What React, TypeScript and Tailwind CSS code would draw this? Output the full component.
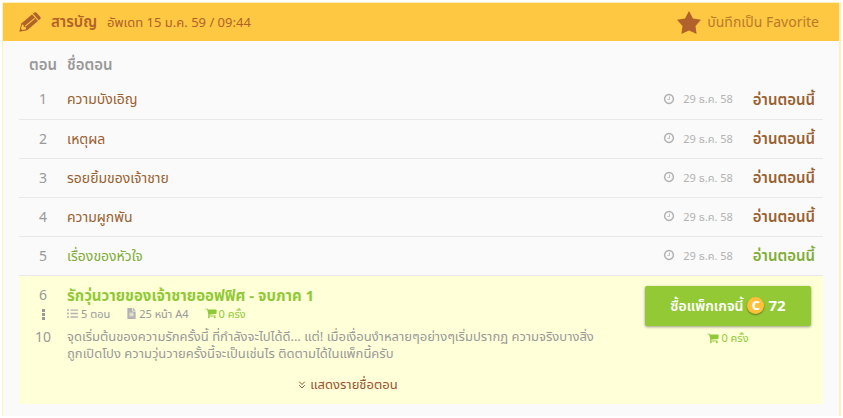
import type { ReactNode } from 'react';
import { ChevronsDown } from 'lucide-react';
import { FaFileAlt, FaListUl } from 'react-icons/fa';

const CHAPTERS = [
  { no: 1, title: 'ความบังเอิญ', date: '29 ธ.ค. 58', isNew: false },
  { no: 2, title: 'เหตุผล', date: '29 ธ.ค. 58', isNew: false },
  { no: 3, title: 'รอยยิ้มของเจ้าชาย', date: '29 ธ.ค. 58', isNew: false },
  { no: 4, title: 'ความผูกพัน', date: '29 ธ.ค. 58', isNew: false },
  { no: 5, title: 'เรื่องของหัวใจ', date: '29 ธ.ค. 58', isNew: true }
];

function Glyph({ className, children }: { className: string; children: ReactNode }) {
  return (
    <svg viewBox="0 0 1792 1792" fill="currentColor" aria-hidden="true" className={className}>
      {children}
    </svg>
  );
}

function ClockIcon() {
  return (
    <Glyph className="size-3">
      <path d="M1024 544v448q0 14-9 23t-23 9h-320q-14 0-23-9t-9-23v-64q0-14 9-23t23-9h224v-352q0-14 9-23t23-9h64q14 0 23 9t9 23zm416 352q0-148-73-273t-198-198-273-73-273 73-198 198-73 273 73 273 198 198 273 73 273-73 198-198 73-273zm224 0q0 209-103 385.5t-279.5 279.5-385.5 103-385.5-103-279.5-279.5-103-385.5 103-385.5 279.5-279.5 385.5-103 385.5 103 279.5 279.5 103 385.5z" />
    </Glyph>
  );
}

function CartIcon() {
  return (
    <Glyph className="size-3">
      <path d="M704 1536q0 52-38 90t-90 38-90-38-38-90 38-90 90-38 90 38 38 90zm896 0q0 52-38 90t-90 38-90-38-38-90 38-90 90-38 90 38 38 90zm128-1088v512q0 24-16.5 42.5t-40.5 21.5l-1044 122q13 60 13 70 0 16-24 64h920q26 0 45 19t19 45-19 45-45 19h-1024q-26 0-45-19t-19-45q0-11 8-31.5t16-36 21.5-40 15.5-29.5l-177-823h-204q-26 0-45-19t-19-45 19-45 45-19h256q16 0 28.5 6.5t19.5 15.5 13 24.5 8 26 5.5 29.5 4.5 26h1201q26 0 45 19t19 45z" />
    </Glyph>
  );
}

function StarIcon() {
  return (
    <svg viewBox="0 0 24 23" fill="currentColor" aria-hidden="true" className="h-[23px] w-6">
      <path d="M12 0l4 7.4 8 1.3-5.5 6.2 1.1 8.1-7.6-3.4L4.4 23l1.1-8.1L0 8.7l8-1.3z" />
    </svg>
  );
}

function PencilIcon() {
  return (
    <svg viewBox="0 0 22 20" aria-hidden="true" className="h-5 w-[22px]">
      <path
        fill="currentColor"
        d="M15.3.6q1.3-.8 2.5.3l3.4 3.9q1 1.3-.2 2.5L8.2 18.2.3 19.8l2-8.3z"
      />
      <path fill="none" stroke="#ffc842" strokeWidth="1.1" d="M13.2 1.6l6.4 7.2M6.3 14.2l9.4-7.9" />
      <path fill="#ffc842" d="M3.1 12.6l1.3.2.4 2 2 .1.2 2.3-3.8.8-1.2-1.3z" />
    </svg>
  );
}

function MoreIcon() {
  return (
    <svg viewBox="0 0 3 11" fill="currentColor" aria-hidden="true" className="h-[11px] w-[3px]">
      <path d="M0 0h3v3H0zM0 4h3v3H0zM0 8h3v3H0z" />
    </svg>
  );
}

export default function App() {
  return (
    <div className="bg-white p-0.5 font-['Noto_Sans','Noto_Sans_Thai',Tahoma,sans-serif] text-sm text-[#999]">
      <section className="border-t border-r-2 border-l border-[#fdf0bd] bg-[#fafafa]">
        <header className="flex h-[38px] items-center justify-between bg-[#ffc842] pr-5 pl-4 text-[#b1622a]">
          <div className="flex items-center gap-2.5">
            <PencilIcon />
            <h2 className="text-[15px] font-semibold">สารบัญ</h2>
            <span className="text-[13px]">อัพเดท 15 ม.ค. 59 / 09:44</span>
          </div>
          <button type="button" className="flex items-center gap-1.5">
            <StarIcon />
            <span className="text-[#b97a2a]">บันทึกเป็น Favorite</span>
          </button>
        </header>

        <div className="px-4 pt-1 pb-3">
          <table className="w-full border-collapse">
            <thead>
              <tr className="h-[35px] text-left text-[15px]">
                <th className="w-12 p-0 pt-1 text-center font-semibold">ตอน</th>
                <th className="p-0 pt-1 font-semibold">ชื่อตอน</th>
                <th className="w-[196px] p-0" aria-label="อ่านตอนนี้" />
              </tr>
            </thead>
            <tbody>
              {CHAPTERS.map((chapter) => (
                <tr
                  key={chapter.no}
                  className={`h-[39px] border-b border-[#e8e8e8] ${chapter.isNew ? 'text-[#80ad35]' : 'text-[#99602f]'}`}
                >
                  <td className="p-0 text-center text-[#999]">{chapter.no}</td>
                  <td className="p-0">
                    <a href={`#chapter-${chapter.no}`}>{chapter.title}</a>
                  </td>
                  <td className="p-0 pr-2">
                    <div className="flex items-center justify-end">
                      <span className="mr-5 flex items-center gap-2 text-[11px] text-[#b3b3b3]">
                        <ClockIcon />
                        {chapter.date}
                      </span>
                      <a href={`#read-${chapter.no}`} className="text-[15px] font-semibold">
                        อ่านตอนนี้
                      </a>
                    </div>
                  </td>
                </tr>
              ))}
              <tr className="bg-[#ffffd8] align-top">
                <td className="p-0 pt-[9px]">
                  <div className="flex flex-col items-center">
                    <span>6</span>
                    <span className="flex h-5 items-center">
                      <MoreIcon />
                    </span>
                    <span className="leading-6">10</span>
                  </div>
                </td>
                <td className="p-0 pt-[9px] pb-[11px]">
                  <h3 className="text-[15px] leading-5 font-bold">
                    <a href="#package" className="text-[#8fc936]">
                      รักวุ่นวายของเจ้าชายออฟฟิศ - จบภาค 1
                    </a>
                  </h3>
                  <div className="flex h-[18px] items-center gap-4 text-[11px]">
                    <span className="flex items-center gap-[3px]">
                      <FaListUl className="size-[11px] text-[#b3b3b3]" />5 ตอน
                    </span>
                    <span className="flex items-center gap-0.5">
                      <FaFileAlt className="size-[11px] text-[#b3b3b3]" />
                      25 หน้า A4
                    </span>
                    <span className="flex items-center gap-0.5 text-[#8fc936]">
                      <CartIcon />0 ครั้ง
                    </span>
                  </div>
                  <p className="mt-[5px] text-[13px] leading-[17px]">
                    จุดเริ่มต้นของความรักครั้งนี้ ที่กำลังจะไปได้ดี... แต่! เมื่อเงื่อนงำหลายๆอย่างๆเริ่มปรากฏ ความจริงบางสิ่ง
                    <br />
                    ถูกเปิดโปง ความวุ่นวายครั้งนี้จะเป็นเช่นไร ติดตามได้ในแพ็กนี้ครับ
                  </p>
                  <button type="button" className="mx-auto mt-[15px] flex h-4 items-center gap-0.5 text-[13px] text-[#99522f]">
                    <ChevronsDown className="size-3" />
                    แสดงรายชื่อตอน
                  </button>
                </td>
                <td className="p-0 pt-2.5 pr-3">
                  <div className="flex flex-col items-end">
                    <button
                      type="button"
                      className="flex h-10 w-[166px] items-center justify-center gap-1 rounded-xs bg-[#94c936] font-semibold text-white shadow-[0_1px_3px_rgba(0,0,0,0.4)]"
                    >
                      ซื้อแพ็กเกจนี้
                      <span className="flex size-[17px] items-center justify-center rounded-full bg-[#ffc03a] text-[13px] leading-none font-extrabold shadow-[0_1px_2px_rgba(0,0,0,0.4)]">
                        C
                      </span>
                      <span className="text-[15px] font-bold">72</span>
                    </button>
                    <span className="mt-1 flex h-4 w-[166px] items-center justify-center gap-0.5 text-[11px] text-[#8fc936]">
                      <CartIcon />0 ครั้ง
                    </span>
                  </div>
                </td>
              </tr>
            </tbody>
          </table>
        </div>
      </section>
    </div>
  );
}
